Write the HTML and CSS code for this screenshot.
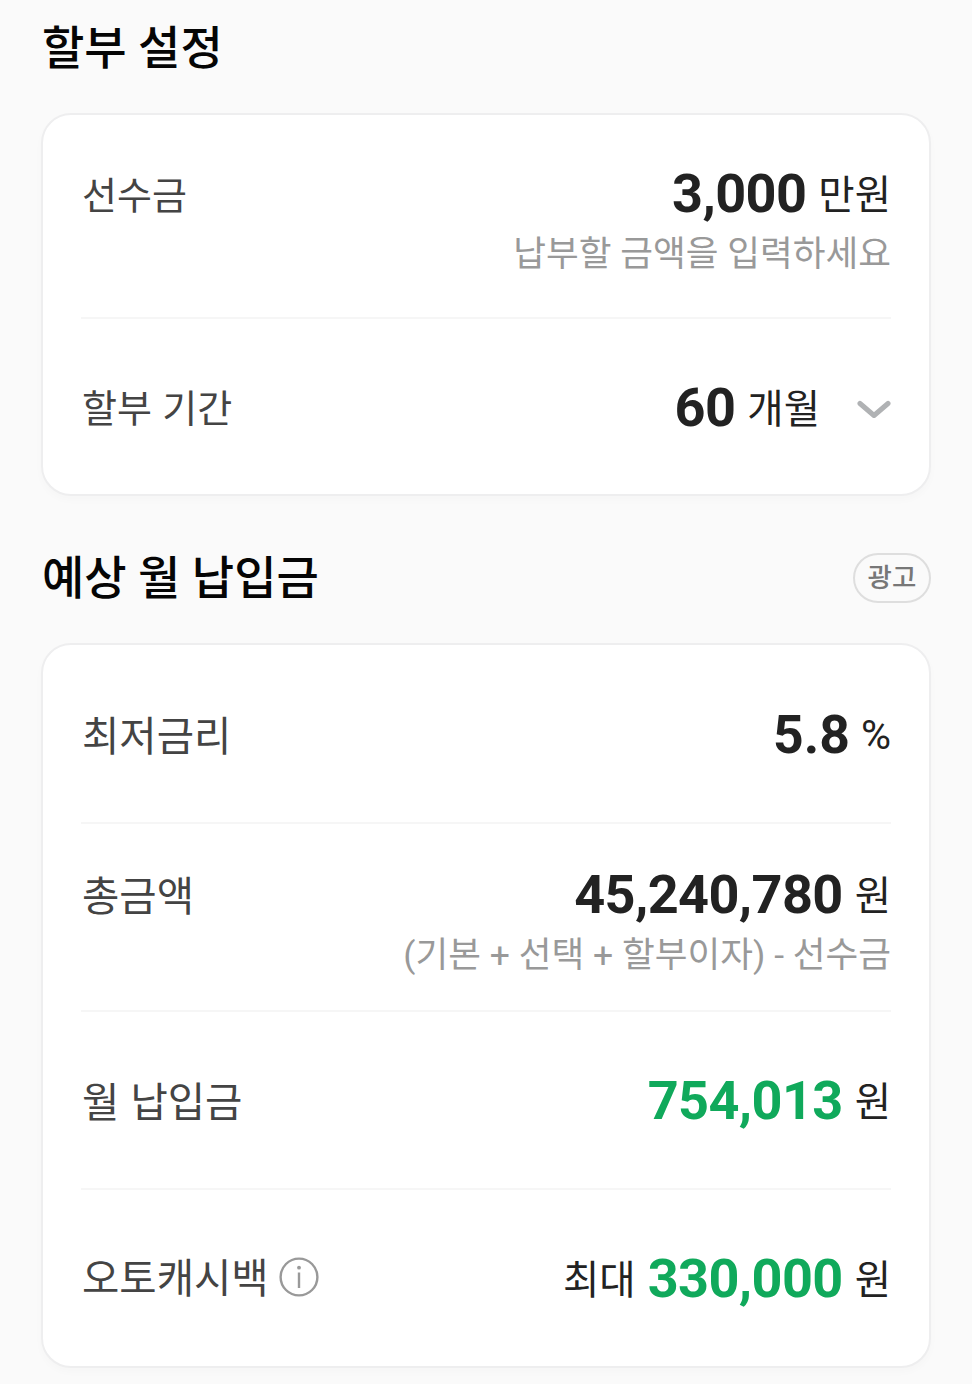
FILE: index.html
```html
<!DOCTYPE html>
<html lang="ko">
<head>
<meta charset="utf-8">
<title>할부 설정</title>
<link rel="stylesheet" href="styles.css">
</head>
<body>
<main class="page">
  <header class="heading heading-first"><h2>할부 설정</h2></header>
  <section class="card card-settings">
    <div class="row row-deposit">
      <span class="label">선수금</span>
      <div class="content">
        <div class="value"><strong>3,000</strong><span class="unit">만원</span></div>
        <p class="hint">납부할 금액을 입력하세요</p>
      </div>
    </div>
    <div class="row row-period">
      <span class="label">할부 기간</span>
      <div class="value"><strong>60</strong><span class="unit">개월</span>
        <svg class="chevron" viewBox="0 0 34 20"><path d="M3 3.5 17 15.5 31 3.5"/></svg>
      </div>
    </div>
  </section>
  <header class="heading heading-second"><h2>예상 월 납입금</h2><span class="badge">광고</span></header>
  <section class="card card-result">
    <div class="row row-rate">
      <span class="label">최저금리</span>
      <div class="value"><strong class="decimal">5.8</strong><span class="unit percent">%</span></div>
    </div>
    <div class="row row-total">
      <span class="label">총금액</span>
      <div class="content">
        <div class="value"><strong>45,240,780</strong><span class="unit">원</span></div>
        <p class="hint formula">(기본 + 선택 + 할부이자) - 선수금</p>
      </div>
    </div>
    <div class="row row-monthly">
      <span class="label">월 납입금</span>
      <div class="value"><strong class="green">754,013</strong><span class="unit">원</span></div>
    </div>
    <div class="row row-cashback">
      <span class="label with-icon">오토캐시백
        <svg class="info" viewBox="0 0 40 40"><circle cx="20" cy="20" r="18.4"/><path d="M20 15.5V31"/><circle class="dot" cx="20" cy="10.7" r="1.9"/></svg>
      </span>
      <div class="value"><span class="unit prefix">최대</span><strong class="green">330,000</strong><span class="unit">원</span></div>
    </div>
  </section>
</main>
</body>
</html>
```
FILE: styles.css
```css
* { box-sizing: border-box; }
body { margin: 0; background: #fafafa; font-family: Roboto, "Noto Sans CJK KR", sans-serif; color: #222; }
.page { height: 1384px; padding: 0 41px; overflow: hidden; }
.heading { display: flex; justify-content: space-between; align-items: center; }
.heading-first { height: 113px; padding-bottom: 17px; }
.heading-second { height: 147px; padding-top: 16px; }
h2 { margin: 0; padding-left: 1px; font-size: 46px; line-height: 60px; font-weight: 500; color: #050505; }
.badge { width: 78px; height: 50px; border: 2px solid #dedede; border-radius: 25px; font-size: 26.5px; line-height: 46px; font-weight: 500; color: #777; text-align: center; }
.card { border: 2px solid #eeeeef; border-radius: 30px; background: #fff; padding: 0 38px; box-shadow: 0 4px 8px rgb(0 0 0 / 2%); }
.card-settings { height: 383px; }
.card-result { height: 725px; }
.row { display: flex; justify-content: space-between; align-items: flex-start; }
.row + .row { border-top: 2px solid #f6f6f6; }
.row-deposit { height: 202px; padding-top: 49px; }
.row-period { padding-top: 59px; }
.row-rate { height: 177px; padding-top: 60px; }
.row-total { height: 188px; padding-top: 41px; }
.row-monthly { height: 178px; padding-top: 59px; }
.row-cashback { padding-top: 59px; }
.label { font-size: 38px; line-height: 60px; color: #444; word-spacing: 1px; padding-left: 1px; white-space: nowrap; }
.card-result .label { font-size: 40.6px; padding-top: 2px; }
.row-deposit .label { padding-top: 2px; }
.row-period .label { padding-top: 1px; }
.value { display: flex; align-items: center; justify-content: flex-end; height: 60px; line-height: 60px; white-space: nowrap; }
.value strong { font-size: 54px; font-weight: 700; color: #222; letter-spacing: -0.6px; }
.value .decimal { font-size: 53.5px; letter-spacing: 0; }
.value .green { color: #10a95b; }
.unit { font-size: 39.5px; color: #222; margin-left: 12px; padding-top: 3px; }
.percent { font-size: 41px; padding-top: 0; margin-left: 11px; }
.prefix { margin: 0 12px 0 0; }
.hint { margin: 0; font-size: 35.6px; line-height: 61px; color: #999; text-align: right; white-space: nowrap; }
.chevron { width: 34px; height: 20px; margin: 3px 0 0 37px; fill: none; stroke: #b0b2b4; stroke-width: 5; stroke-linecap: round; stroke-linejoin: round; }
.card-result .with-icon { display: flex; align-items: center; gap: 10px; padding-top: 0; }
.info { width: 40px; height: 40px; fill: none; stroke: #999; stroke-width: 2.4; margin-bottom: 4px; }
.info .dot { fill: #999; stroke: none; }
```
